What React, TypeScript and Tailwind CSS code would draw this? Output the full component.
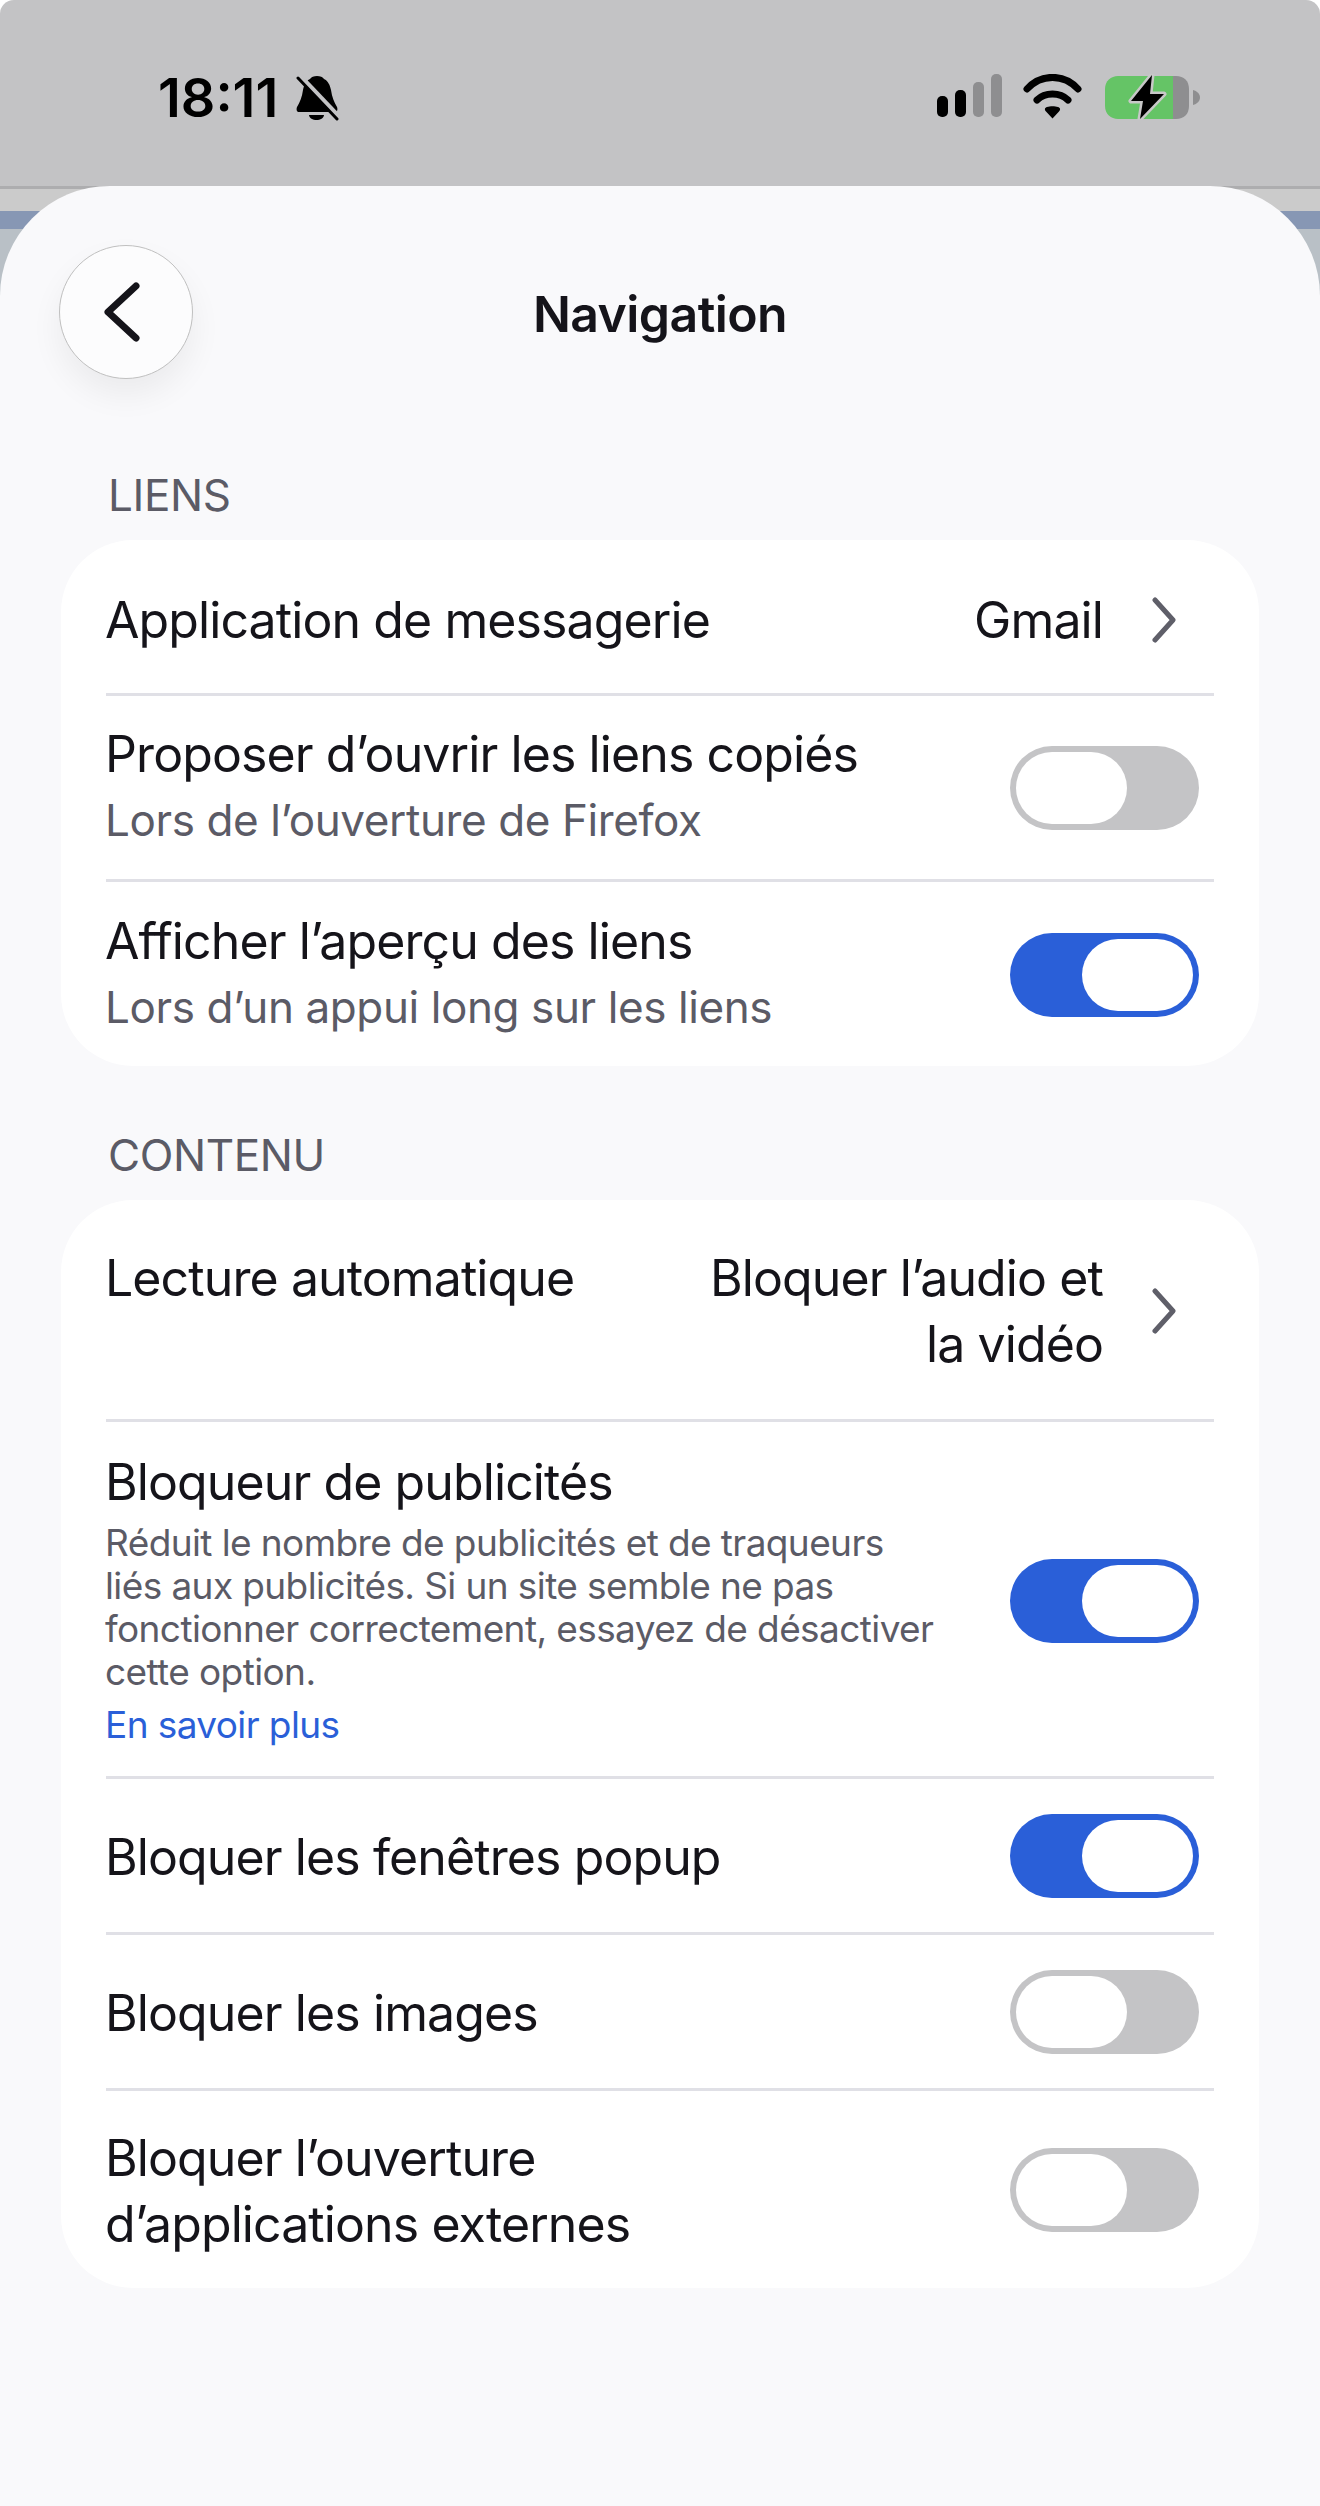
const font = "font-['Inter','Liberation_Sans',sans-serif]";

function Bell() {
  return (
    <svg width="45" height="47" viewBox="0 0 45 47" className="ml-[18px] mt-[1px]">
      <path d="M21 1C24 1 27 2 28 4C32 6 34 10 35 15C36 22 38 27 41 32C42 35 41 37 39 37H3C1 37 0 35 1 32C4 27 6 22 7 15C8 10 10 6 14 4C15 2 18 1 21 1Z" fill="#000" />
      <path d="M13 40H28C28 43 24 45 20.500 45C17 45 13 43 13 40Z" fill="#000" />
      <path d="M4 1L45 44" stroke="#c3c3c5" strokeWidth="5" />
      <path d="M2 3L41 44" stroke="#000" strokeWidth="3" strokeLinecap="round" />
    </svg>
  );
}

function Signal() {
  return (
    <div className="flex items-end gap-[7px] h-[43px]">
      <div className="w-[11px] h-[21px] rounded-[5px] bg-black" />
      <div className="w-[11px] h-[27px] rounded-[5px] bg-black" />
      <div className="w-[11px] h-[35px] rounded-[5px] bg-[#8e8e90]" />
      <div className="w-[11px] h-[43px] rounded-[5px] bg-[#8e8e90]" />
    </div>
  );
}

function Wifi() {
  return (
    <svg width="59" height="45" viewBox="0 0 59 45" className="ml-[21px]">
      <path d="M4 15C18 -0.500 41 -0.500 55 15" fill="none" stroke="#000" strokeWidth="7" strokeLinecap="round" />
      <path d="M14 26C22 18 37 18 45 26" fill="none" stroke="#000" strokeWidth="7" strokeLinecap="round" />
      <path d="M29.500 44.500L23 37.500C21 35.500 22 33.500 24 33C27 32 32 32 35 33C37 33.500 38 35.500 36 37.500Z" fill="#000" />
    </svg>
  );
}

function Battery() {
  return (
    <svg width="95" height="46" viewBox="0 0 95 46" className="ml-[23px]">
      <path d="M13 2H68V45H13C6 45 0 40 0 32V15C0 7 6 2 13 2Z" fill="#65c466" />
      <path d="M68 2H71C79 2 84 7 84 15V32C84 40 79 45 71 45H68Z" fill="#8e8e90" />
      <path d="M88 16C92 17 95 20 95 23.500C95 27 92 30 88 31Z" fill="#8e8e90" />
      <path d="M47 1L26 27H38L35 45L59 20H45Z" fill="#000" stroke="#c8c8c8" strokeWidth="5" strokeLinejoin="round" paintOrder="stroke" />
    </svg>
  );
}

function StatusBar() {
  return (
    <div className={`h-[186px] bg-[#c3c3c5] rounded-t-[14px] flex justify-between pl-[158px] pr-[120px] pt-[74px] ${font}`}>
      <div className="flex items-start">
        <span className="text-[54px] leading-[48px] font-semibold text-black">18:11</span>
        <Bell />
      </div>
      <div className="flex items-start">
        <Signal />
        <Wifi />
        <Battery />
      </div>
    </div>
  );
}

function Toggle({ on }: { on: boolean }) {
  return (
    <div className={`w-[189px] h-[84px] shrink-0 rounded-[42px] p-[6px] flex ${on ? "bg-[#2a5fd8] justify-end" : "bg-[#c4c4c6] justify-start"}`}>
      <div className="w-[111px] h-[72px] rounded-[36px] bg-white" />
    </div>
  );
}

function Chevron() {
  return (
    <svg width="24" height="46" viewBox="0 0 24 46" className="shrink-0">
      <path d="M3 3L21 23L3 43" fill="none" stroke="#5f5f69" strokeWidth="5" strokeLinecap="round" strokeLinejoin="round" />
    </svg>
  );
}

function Divider() {
  return <div className="h-[3px] mx-[45px] bg-[#e0e0e6]" />;
}

const titleCls = "text-[50px] leading-[66px] tracking-[-0.9px] text-[#15141a]";
const subCls = "text-[44px] leading-[56px] tracking-[-0.4px] text-[#5b5b66]";
const smallCls = "text-[37px] leading-[43px] tracking-[-0.6px]";

function Label({ children }: { children: string }) {
  return <div className={`pl-[108px] ${subCls}`}>{children}</div>;
}

function SubRow({ title, sub, on, cls }: { title: string; sub: string; on: boolean; cls: string }) {
  return (
    <div className={`flex items-center justify-between pl-[44px] pr-[60px] ${cls}`}>
      <div className="mb-[6px]">
        <div className={titleCls}>{title}</div>
        <div className={`${subCls} mt-[5px]`}>{sub}</div>
      </div>
      <div className="pt-[1px]"><Toggle on={on} /></div>
    </div>
  );
}

function PlainRow({ title, on, cls }: { title: React.ReactNode; on: boolean; cls: string }) {
  return (
    <div className={`flex items-center justify-between pl-[44px] pr-[60px] ${cls}`}>
      <div className={`${titleCls} pt-[3px]`}>{title}</div>
      <div className="pt-[1px]"><Toggle on={on} /></div>
    </div>
  );
}

export default function App() {
  return (
    <div className={`relative w-[1320px] h-[2506px] overflow-hidden bg-white ${font}`}>
      <StatusBar />
      <div className="h-[25px] bg-[#cbcbcb] border-t-[3px] border-[#adadaf]" />
      <div className="h-[18px] bg-[#8797b4]" />
      <div className="h-[200px] bg-[#b9c0c6]" />
      <div className="absolute left-0 right-0 top-[186px] h-[2320px] bg-[#f9f9fb] rounded-t-[110px] pt-[59px]">
        <div className="grid grid-cols-[1fr_auto_1fr] items-center pl-[59px]">
          <div className="w-[134px] h-[134px] rounded-full bg-[#fcfcfd] border border-[#c0c0c0] shadow-[0_16px_32px_rgba(0,0,0,0.06)] flex items-center justify-center">
            <svg width="40" height="60" viewBox="0 0 40 60" className="ml-[-9px]">
              <path d="M34 4L6 30L34 56" fill="none" stroke="#15141a" strokeWidth="7" strokeLinecap="round" strokeLinejoin="round" />
            </svg>
          </div>
          <div className="text-[50px] leading-[66px] tracking-[-0.6px] font-semibold text-[#15141a] ml-[-59px] mt-[3px]">Navigation</div>
          <div />
        </div>

        <div className="mt-[88px]"><Label>LIENS</Label></div>
        <div className="mx-[61px] mt-[17px] bg-white rounded-[72px] overflow-hidden">
          <div className="h-[153px] flex items-center justify-between pl-[44px] pr-[83px] pt-[6px]">
            <div className={titleCls}>Application de messagerie</div>
            <div className="flex items-center gap-[49px]">
              <div className={titleCls}>Gmail</div>
              <Chevron />
            </div>
          </div>
          <Divider />
          <SubRow title="Proposer d’ouvrir les liens copiés" sub="Lors de l’ouverture de Firefox" on={false} cls="h-[183px]" />
          <Divider />
          <SubRow title="Afficher l’aperçu des liens" sub="Lors d’un appui long sur les liens" on={true} cls="h-[184px]" />
        </div>

        <div className="mt-[61px]"><Label>CONTENU</Label></div>
        <div className="mx-[61px] mt-[17px] bg-white rounded-[72px] overflow-hidden">
          <div className="h-[219px] flex items-start justify-between pl-[44px] pr-[83px] pt-[45px]">
            <div className={titleCls}>Lecture automatique</div>
            <div className="flex items-center gap-[49px]">
              <div className={`${titleCls} text-right`}>Bloquer l’audio et<br />la vidéo</div>
              <Chevron />
            </div>
          </div>
          <Divider />
          <div className="h-[354px] flex items-center justify-between pl-[44px] pr-[60px]">
            <div className="w-[840px] mb-[3px]">
              <div className={titleCls}>Bloqueur de publicités</div>
              <div className={`${smallCls} text-[#5b5b66] mt-[6px]`}>Réduit le nombre de publicités et de traqueurs liés aux publicités. Si un site semble ne pas fonctionner correctement, essayez de désactiver cette option.</div>
              <div className={`${smallCls} text-[#2a5fd8] mt-[10px]`}>En savoir plus</div>
            </div>
            <div className="pt-[3px]"><Toggle on={true} /></div>
          </div>
          <Divider />
          <PlainRow title="Bloquer les fenêtres popup" on={true} cls="h-[153px]" />
          <Divider />
          <PlainRow title="Bloquer les images" on={false} cls="h-[153px]" />
          <Divider />
          <PlainRow title={<>Bloquer l’ouverture<br />d’applications externes</>} on={false} cls="h-[197px]" />
        </div>
      </div>
    </div>
  );
}
